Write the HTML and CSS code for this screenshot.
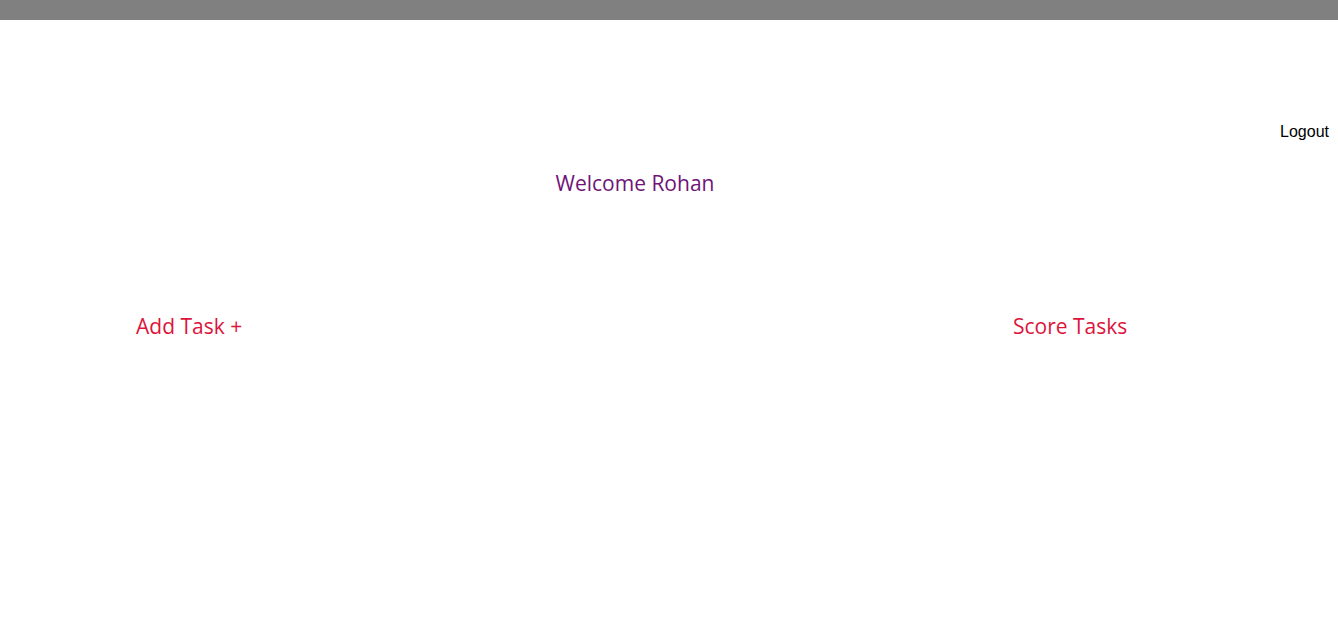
FILE: index.html
```html
<!DOCTYPE html>
<html>
<head>
<meta charset="utf-8">
<link rel="stylesheet" href="styles.css">
</head>
<body>
<div class="topbar"></div>
<div class="logout-row"><a class="logout">Logout</a></div>
<div class="welcome-wrap"><h2 class="welcome">Welcome Rohan</h2></div>
<div class="tasks">
  <a class="task-link">Add Task +</a>
  <a class="task-link">Score Tasks</a>
</div>
</body>
</html>
```
FILE: styles.css
```css
html, body { margin: 0; padding: 0; background: #fff; }
body { font-family: "Open Sans", sans-serif; }
.topbar { height: 20px; background: #808080; }
.logout-row { display: flex; justify-content: flex-end; padding: 102px 9px 0 0; }
.logout { font-family: "Liberation Sans", Arial, sans-serif; font-size: 16px; color: #000; line-height: 20px; }
.welcome-wrap { width: 1270px; text-align: center; padding-top: 26px; }
.welcome { margin: 0; font-weight: 400; font-size: 21px; line-height: 30px; color: #6f1476; }
.tasks { display: grid; grid-template-columns: 877px auto; padding: 113px 0 0 136px; }
.task-link { font-size: 21px; line-height: 30px; color: #dc143c; }
```
